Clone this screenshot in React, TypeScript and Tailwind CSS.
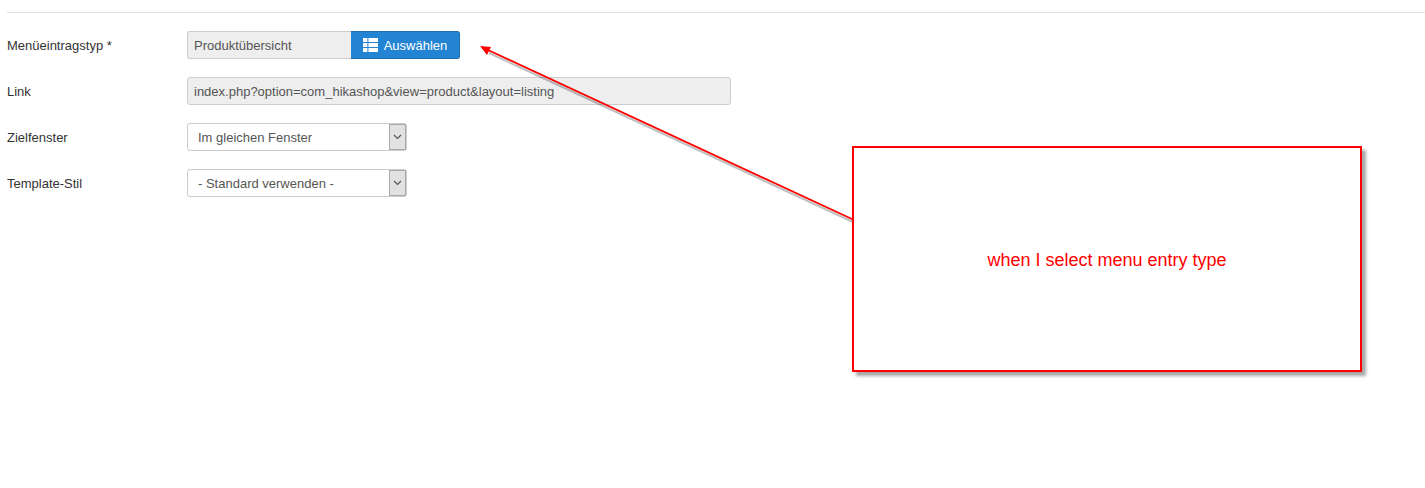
const labelClass = "w-[180px] shrink-0 pt-[2px] text-[13px] text-[#333333]";

function Row({ label, children }: { label: string; children: React.ReactNode }) {
  return (
    <div className="flex h-[28px] items-center">
      <span className={labelClass}>{label}</span>
      {children}
    </div>
  );
}

function FakeSelect({ value }: { value: string }) {
  return (
    <div className="flex h-[28px] w-[220px] items-center justify-between rounded-[3px] border border-[#cccccc] bg-white pl-[10px] text-[13px] text-[#555555]">
      <span className="pt-[2px]">{value}</span>
      <span className="flex h-[26px] w-[17px] items-center justify-center border border-[#a9a9a9] bg-[#e1e1e1]">
        <svg width="9" height="6" viewBox="0 0 9 6" fill="none" stroke="#555555" strokeWidth="1.2">
          <path d="M1 1l3.5 3.5L8 1" />
        </svg>
      </span>
    </div>
  );
}

function ListIcon() {
  return (
    <svg width="15" height="14" viewBox="0 0 15 14" fill="#ffffff" className="mr-[6px]">
      <rect x="0" y="0" width="4.4" height="4" />
      <rect x="5.4" y="0" width="9.6" height="4" />
      <rect x="0" y="5" width="4.4" height="4" />
      <rect x="5.4" y="5" width="9.6" height="4" />
      <rect x="0" y="10" width="4.4" height="4" />
      <rect x="5.4" y="10" width="9.6" height="4" />
    </svg>
  );
}

export default function App() {
  return (
    <div className="relative h-[488px] w-[1425px] overflow-hidden bg-white font-['Liberation_Sans',Arial,sans-serif]">
      <div className="pl-[7px] pt-[12px]">
        <div className="h-px bg-[#e0e0e0]" />
        <div className="mt-[18px] flex flex-col gap-[18px]">
          <Row label="Menüeintragstyp *">
            <div className="flex h-[28px]">
              <div className="flex w-[164px] items-center rounded-l-[3px] border border-r-0 border-[#cccccc] bg-[#eeeeee] pl-[6px] pt-[2px] text-[13px] text-[#555555]">
                Produktübersicht
              </div>
              <button className="flex w-[109px] items-center justify-center rounded-r-[3px] border border-[#1d6cb0] border-l-0 bg-[#2384d3] text-[13px] text-white">
                <ListIcon />
                <span className="pt-[2px]">Auswählen</span>
              </button>
            </div>
          </Row>
          <Row label="Link">
            <div className="flex h-[28px] w-[544px] items-center rounded-[3px] border border-[#cccccc] bg-[#eeeeee] pl-[6px] pt-[2px] text-[13px] text-[#555555]">
              index.php?option=com_hikashop&amp;view=product&amp;layout=listing
            </div>
          </Row>
          <Row label="Zielfenster">
            <FakeSelect value="Im gleichen Fenster" />
          </Row>
          <Row label="Template-Stil">
            <FakeSelect value="- Standard verwenden -" />
          </Row>
        </div>
      </div>

      {/* annotation drawn over the form */}
      <svg className="absolute left-0 top-0" width="1425" height="488" fill="none">
        <path d="M853 219.5L488 50" stroke="#000000" strokeOpacity="0.25" strokeWidth="2" transform="translate(1 3)" />
        <path d="M853 219.5L488 50" stroke="#ff0000" strokeWidth="1.8" />
        <path d="M480 46L491 47L487 55Z" fill="#ff0000" />
      </svg>
      <div className="absolute left-[852px] top-[146px] flex h-[226px] w-[510px] items-center justify-center border-2 border-[#ff0000] bg-white pt-[2px] text-[18px] text-[#ff0000] shadow-[4px_4px_3px_rgba(0,0,0,0.35)]">
        when I select menu entry type
      </div>
    </div>
  );
}
